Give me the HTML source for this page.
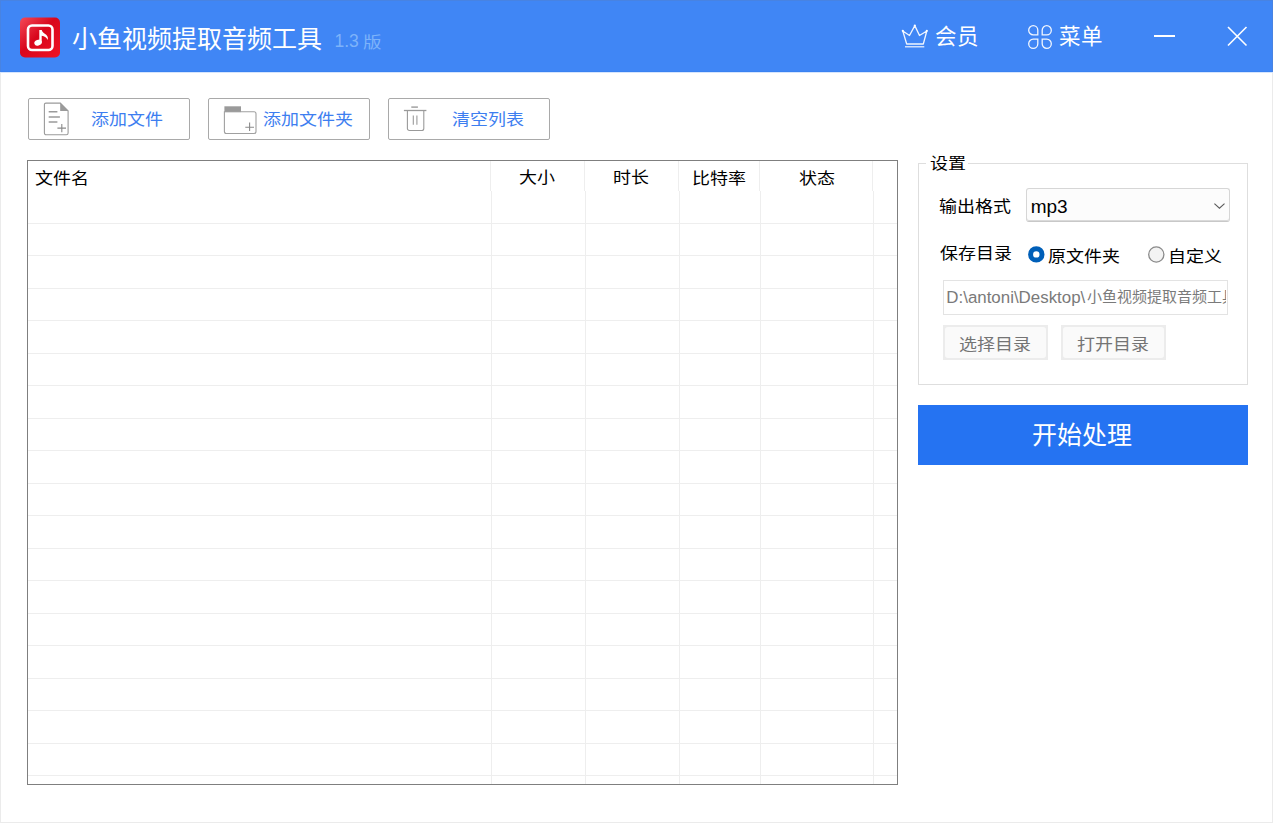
<!DOCTYPE html>
<html lang="zh-CN">
<head>
<meta charset="utf-8">
<style>
html,body{margin:0;padding:0;}
body{width:1273px;height:823px;position:relative;overflow:hidden;background:#fff;font-family:"Liberation Sans",sans-serif;}
.a{position:absolute;}
.t{position:absolute;white-space:nowrap;line-height:1;}
#hdr{left:0;top:0;width:1273px;height:72px;background:#4086f5;}
#hdrline{left:0;top:71px;width:1273px;height:1px;background:#3a82f2;}
.wb{background:#ebebeb;}
.btn{position:absolute;top:98px;height:40px;width:160px;border:1px solid #a9a9a9;border-radius:2px;background:#fff;}
.btxt{color:#3d7ef0;font-size:18px;}
.hd{font-size:18px;color:#000;}
.vl{position:absolute;width:1px;background:#eeeeee;}
.hl{position:absolute;height:1px;background:#eeeeee;left:28px;width:869px;}
</style>
</head>
<body>
<!-- header -->
<div id="hdr" class="a"></div>
<div id="hdrline" class="a"></div>
<div class="a" style="left:0;top:72px;width:1273px;height:1px;background:#d6e5fd;"></div>
<div class="a" style="left:0;top:0;width:1273px;height:1px;background:#4883e2;"></div>
<div class="a" style="left:0;top:0;width:1px;height:72px;background:#4883e2;"></div>
<div class="a" style="left:1272px;top:0;width:1px;height:72px;background:#4883e2;"></div>
<!-- logo -->
<svg class="a" style="left:20px;top:17px" width="40" height="41" viewBox="0 0 40 41">
<defs>
<linearGradient id="lg" x1="0" y1="0" x2="1" y2="1">
<stop offset="0" stop-color="#f44a58"/>
<stop offset="0.45" stop-color="#d8061c"/>
<stop offset="1" stop-color="#f01424"/>
</linearGradient>
</defs>
<rect x="0" y="0.5" width="40" height="40" rx="5" fill="url(#lg)"/>
<rect x="8" y="8.5" width="24.5" height="24.5" rx="4" fill="none" stroke="#fff" stroke-width="2.6"/>
<path d="M19.3 25.5 V12.9 H21.7 C22.2 15 24.4 16.2 26.2 17.8 C27.8 19.3 28.3 21.2 27.6 23 C27 20.8 24.6 19.2 21.7 18.8 V25.5 Z" fill="#fff"/><ellipse cx="18.1" cy="25.6" rx="3.9" ry="2.8" transform="rotate(-22 18.1 25.6)" fill="#fff"/>
</svg>
<div id="t_title" class="t" style="left:72.3px;top:26.8px;font-size:25px;color:#fff;font-weight:300;">小鱼视频提取音频工具</div>
<div id="t_ver1" class="t" style="left:334.5px;top:32.6px;font-size:17.5px;color:#7db3fa;">1.3</div>
<div id="t_ver2" class="t" style="left:363.1px;top:34.7px;font-size:18.5px;color:#7db3fa;transform:scaleY(0.85);transform-origin:0 0;">版</div>

<!-- crown -->
<svg class="a" style="left:898px;top:20px" width="34" height="32" viewBox="0 0 34 32">
<path d="M4.8 11 L11.5 15.5 L16.8 5.6 L21.5 15.5 L28.8 11 L25.3 24 L8.7 24 Z" fill="none" stroke="#fff" stroke-opacity="0.92" stroke-width="1.3" stroke-linejoin="round"/>
<circle cx="4.8" cy="10.8" r="1.1" fill="#fff"/><circle cx="16.8" cy="5.5" r="1.1" fill="#fff"/><circle cx="28.8" cy="10.8" r="1.1" fill="#fff"/>
<line x1="7" y1="26.8" x2="26.3" y2="26.8" stroke="#fff" stroke-opacity="0.92" stroke-width="1.2"/>
</svg>
<div id="t_hy" class="t" style="left:935.0px;top:26.8px;font-size:21.5px;color:#fff;">会员</div>
<!-- menu -->
<svg class="a" style="left:1026px;top:23px" width="28" height="28" viewBox="0 0 28 28">
<g fill="none" stroke="#fff" stroke-opacity="0.92" stroke-width="1.3">
<path d="M11.8 11.8 H7.25 A4.55 4.55 0 1 1 11.8 7.25 Z"/>
<path d="M16.2 11.8 H20.75 A4.55 4.55 0 1 0 16.2 7.25 Z"/>
<path d="M11.8 16.2 H7.25 A4.55 4.55 0 1 0 11.8 20.75 Z"/>
<path d="M16.2 16.2 H20.75 A4.55 4.55 0 1 1 16.2 20.75 Z"/>
</g>
</svg>
<div id="t_cd" class="t" style="left:1059.1px;top:27.4px;font-size:21.5px;color:#fff;">菜单</div>
<!-- minimize / close -->
<div class="a" style="left:1154px;top:35px;width:21px;height:2px;background:#fff;"></div>
<svg class="a" style="left:1225px;top:24px" width="24" height="24" viewBox="0 0 24 24">
<path d="M3 3 L21.5 21.5 M21.5 3 L3 21.5" stroke="#fff" stroke-width="1.6"/>
</svg>

<!-- window border -->
<div class="a wb" style="left:0;top:73px;width:1px;height:750px;"></div>
<div class="a wb" style="left:1272px;top:73px;width:1px;height:750px;"></div>
<div class="a wb" style="left:0;top:822px;width:1273px;height:1px;"></div>

<!-- toolbar buttons -->
<div class="btn" style="left:28px;"></div>
<svg class="a" style="left:40px;top:100px" width="32" height="38" viewBox="0 0 32 38">
<path d="M4.4 4.6 A1.5 1.5 0 0 1 5.9 3.1 H20.2 L28.1 11 V33 A1.8 1.8 0 0 1 26.3 34.8 H6.2 A1.8 1.8 0 0 1 4.4 33 Z" fill="none" stroke="#9a9a9a" stroke-width="1.1"/>
<path d="M20.2 2.6 L28.6 11 L20.2 11 Z" fill="#9a9a9a"/>
<path d="M8.7 11.8 H17.4 M8.7 16.9 H19.9 M8.7 22 H17.4" stroke="#9a9a9a" stroke-width="1.5"/>
<path d="M17.4 28.1 H26 M21.8 24 V32.2" stroke="#8a8a8a" stroke-width="1.1"/>
</svg>
<div id="t_b1" class="t btxt" style="left:90.8px;top:112.4px;transform:scaleY(0.87);transform-origin:0 0;">添加文件</div>

<div class="btn" style="left:208px;"></div>
<svg class="a" style="left:220px;top:100px" width="40" height="38" viewBox="0 0 40 38">
<rect x="4.4" y="6.3" width="16.6" height="5.8" fill="#9a9a9a"/>
<path d="M4.4 11.8 H34 A2 2 0 0 1 36 13.8 V31.5 A2 2 0 0 1 34 33.5 H6.4 A2 2 0 0 1 4.4 31.5 Z" fill="none" stroke="#a0a0a0" stroke-width="1.1"/>
<path d="M25.3 27.3 H34 M29.6 22.6 V31" stroke="#8a8a8a" stroke-width="1.1"/>
</svg>
<div id="t_b2" class="t btxt" style="left:263.4px;top:112.4px;transform:scaleY(0.87);transform-origin:0 0;">添加文件夹</div>

<div class="btn" style="left:388px;"></div>
<svg class="a" style="left:400px;top:100px" width="32" height="38" viewBox="0 0 32 38">
<path d="M3.9 10.5 H26.4" stroke="#9a9a9a" stroke-width="1.3"/>
<path d="M11.3 7.1 H17.9" stroke="#9a9a9a" stroke-width="1.4"/>
<path d="M7.4 10.5 V28.5 A2 2 0 0 0 9.4 30.5 H21.8 A2 2 0 0 0 23.8 28.5 V10.5" fill="none" stroke="#9a9a9a" stroke-width="1.1"/>
<path d="M13.3 15.6 V24.8 M16.9 15.6 V24.8" stroke="#9a9a9a" stroke-width="1.1"/>
</svg>
<div id="t_b3" class="t btxt" style="left:452.1px;top:112.4px;transform:scaleY(0.87);transform-origin:0 0;">清空列表</div>

<!-- table -->
<div class="a" style="left:27px;top:160px;width:869px;height:623px;border:1px solid #7f7f7f;"></div>
<div id="grid">
<div class="vl" style="left:490px;top:161px;height:30px;"></div>
<div class="vl" style="left:584px;top:161px;height:30px;"></div>
<div class="vl" style="left:678px;top:161px;height:30px;"></div>
<div class="vl" style="left:759px;top:161px;height:30px;"></div>
<div class="vl" style="left:872px;top:161px;height:30px;"></div>
<div class="vl" style="left:491px;top:191px;height:593px;"></div>
<div class="vl" style="left:585px;top:191px;height:593px;"></div>
<div class="vl" style="left:679px;top:191px;height:593px;"></div>
<div class="vl" style="left:760px;top:191px;height:593px;"></div>
<div class="vl" style="left:873px;top:191px;height:593px;"></div>
<div class="hl" style="top:223px;"></div>
<div class="hl" style="top:255px;"></div>
<div class="hl" style="top:288px;"></div>
<div class="hl" style="top:320px;"></div>
<div class="hl" style="top:353px;"></div>
<div class="hl" style="top:385px;"></div>
<div class="hl" style="top:418px;"></div>
<div class="hl" style="top:450px;"></div>
<div class="hl" style="top:483px;"></div>
<div class="hl" style="top:515px;"></div>
<div class="hl" style="top:548px;"></div>
<div class="hl" style="top:580px;"></div>
<div class="hl" style="top:613px;"></div>
<div class="hl" style="top:645px;"></div>
<div class="hl" style="top:678px;"></div>
<div class="hl" style="top:710px;"></div>
<div class="hl" style="top:743px;"></div>
<div class="hl" style="top:775px;"></div>
</div>
<div id="t_wjm" class="t hd" style="left:34.8px;top:170.6px;transform:scaleY(0.87);transform-origin:0 0;">文件名</div>
<div id="t_dx" class="t hd" style="left:518.7px;top:170.3px;transform:scaleY(0.87);transform-origin:0 0;">大小</div>
<div id="t_sc" class="t hd" style="left:613.0px;top:170.0px;transform:scaleY(0.87);transform-origin:0 0;">时长</div>
<div id="t_btl" class="t hd" style="left:692.3px;top:170.6px;transform:scaleY(0.87);transform-origin:0 0;">比特率</div>
<div id="t_zt" class="t hd" style="left:798.9px;top:170.6px;transform:scaleY(0.87);transform-origin:0 0;">状态</div>

<!-- settings -->
<div class="a" style="left:918px;top:163px;width:328px;height:220px;border:1px solid #dedede;"></div>
<div class="a" style="left:926px;top:155px;width:42px;height:16px;background:#fff;"></div>
<div id="t_sz" class="t" style="left:929.8px;top:156.2px;font-size:18px;color:#000;transform:scaleY(0.87);transform-origin:0 0;">设置</div>
<div id="t_scgs" class="t" style="left:939.4px;top:199.1px;font-size:18px;color:#000;transform:scaleY(0.87);transform-origin:0 0;">输出格式</div>
<div class="a" style="left:1026px;top:188px;width:202px;height:32px;border:1px solid #d6d6d6;border-bottom-color:#c8c8c8;border-radius:3px;background:#fcfcfc;box-shadow:inset 0 -1px 0 #dadada;"></div>
<div id="t_mp3" class="t" style="left:1030.7px;top:196.6px;font-size:19px;color:#000;">mp3</div>
<svg class="a" style="left:1211px;top:200px" width="16" height="12" viewBox="0 0 16 12">
<path d="M3.4 3.6 L8.45 8.2 L13.5 3.6" fill="none" stroke="#5a5a5a" stroke-width="1.1"/>
</svg>
<div id="t_bcml" class="t" style="left:939.7px;top:246.3px;font-size:18px;color:#000;transform:scaleY(0.87);transform-origin:0 0;">保存目录</div>
<svg class="a" style="left:1026px;top:245px" width="20" height="20" viewBox="0 0 20 20">
<circle cx="10.3" cy="9.4" r="5.7" fill="none" stroke="#005fb8" stroke-width="5"/>
</svg>
<div id="t_ywjj" class="t" style="left:1048.1px;top:249.1px;font-size:18px;color:#000;transform:scaleY(0.87);transform-origin:0 0;">原文件夹</div>
<svg class="a" style="left:1146px;top:245px" width="20" height="20" viewBox="0 0 20 20">
<circle cx="10.3" cy="9.5" r="7.6" fill="#f3f3f3" stroke="#8a8a8a" stroke-width="1.3"/>
</svg>
<div id="t_zdy" class="t" style="left:1168.2px;top:249.1px;font-size:18px;color:#000;transform:scaleY(0.87);transform-origin:0 0;">自定义</div>
<div class="a" style="left:943px;top:280px;width:283px;height:33px;border:1px solid #e3e3e3;background:#fff;overflow:hidden;">
<div class="a" style="left:0;top:0;width:282px;height:33px;overflow:hidden;">
<div id="t_path1" class="t" style="left:2.3px;top:8.5px;font-size:16.9px;color:#7a7a7a;">D:\antoni\Desktop\</div>
<div id="t_path2" class="t" style="left:142.5px;top:9px;font-size:15px;color:#7a7a7a;transform:scaleY(0.95);transform-origin:0 0;">小鱼视频提取音频工具</div>
</div>
</div>
<div class="a" style="left:943px;top:325px;width:105px;height:35px;background:#ececec;"></div>
<div class="a" style="left:945px;top:327px;width:101px;height:31px;background:#fafafa;border-radius:3px;"></div>
<div id="t_xzml" class="t" style="left:959.4px;top:337.3px;font-size:18px;color:#747474;transform:scaleY(0.87);transform-origin:0 0;">选择目录</div>
<div class="a" style="left:1061px;top:325px;width:105px;height:35px;background:#ececec;"></div>
<div class="a" style="left:1063px;top:327px;width:101px;height:31px;background:#fafafa;border-radius:3px;"></div>
<div id="t_dkml" class="t" style="left:1077.1px;top:337.3px;font-size:18px;color:#747474;transform:scaleY(0.87);transform-origin:0 0;">打开目录</div>

<div class="a" style="left:918px;top:405px;width:330px;height:60px;background:#2573f2;"></div>
<div id="t_ks" class="t" style="left:1032.4px;top:423.1px;font-size:25px;color:#fff;font-weight:300;">开始处理</div>
</body>
</html>
